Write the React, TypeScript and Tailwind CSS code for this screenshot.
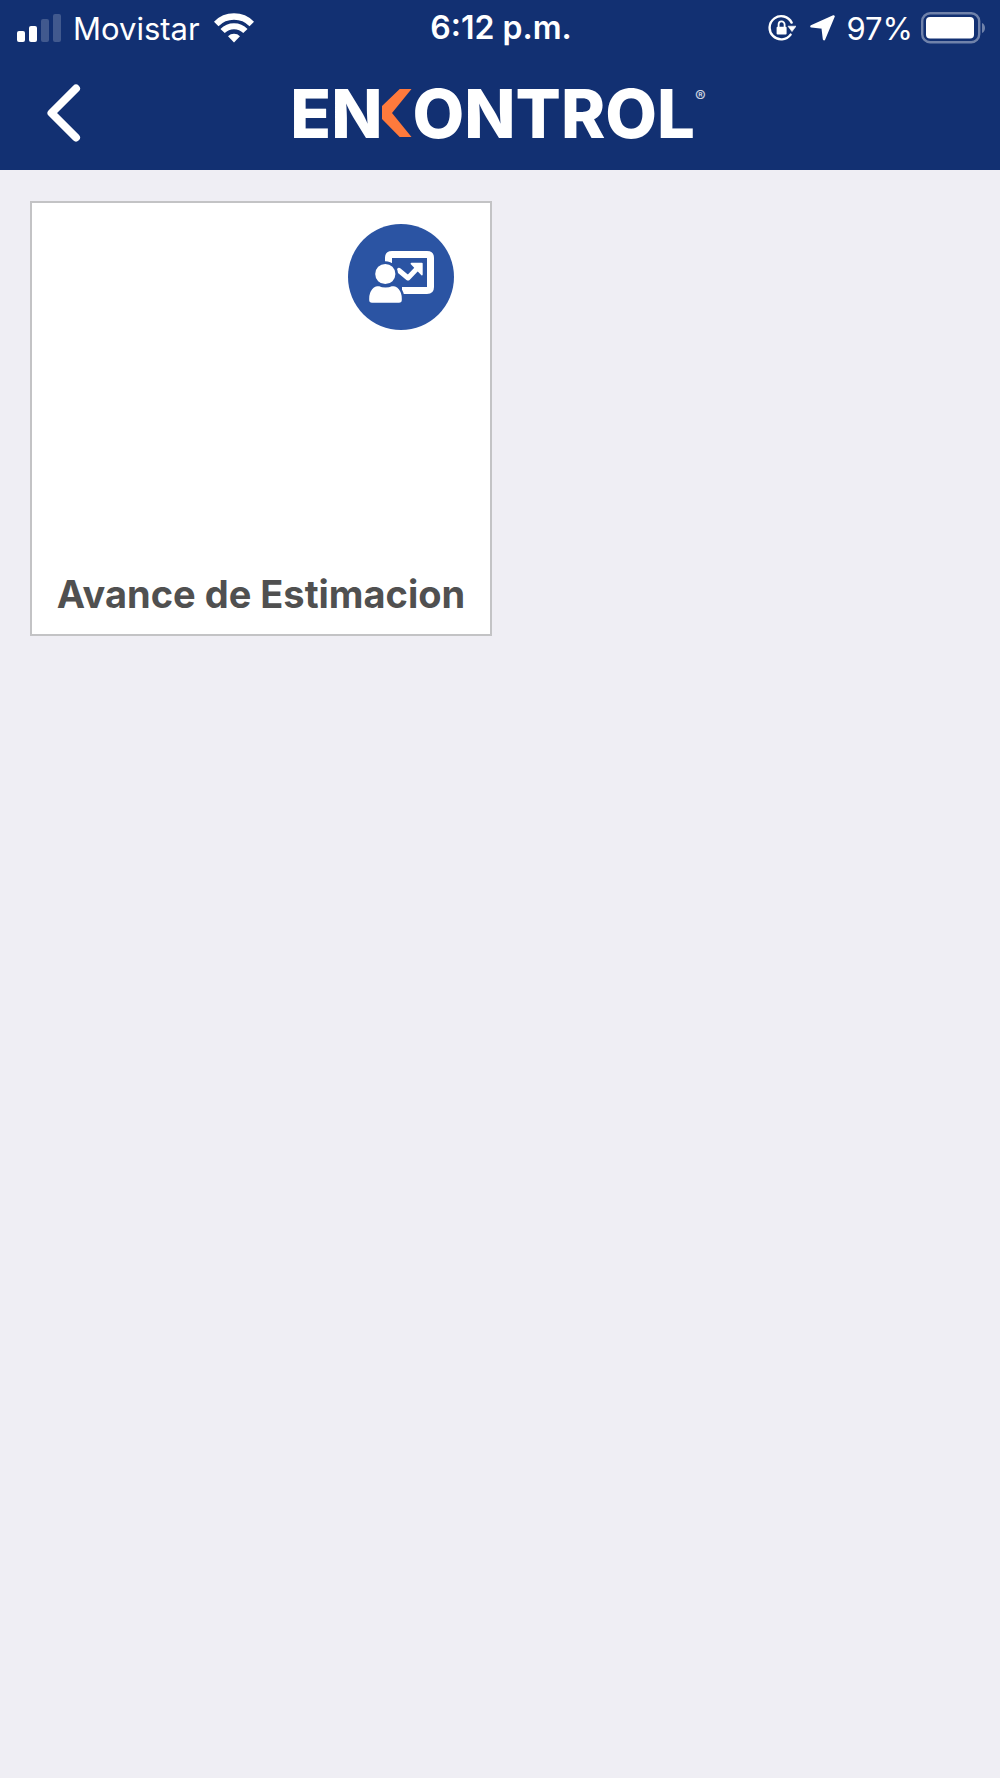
type Tile = {
  id: string;
  label: string;
};

const TILES: Tile[] = [{ id: 'avance', label: 'Avance de Estimacion' }];

const SignalIcon = () => (
  <svg width="44" height="28" viewBox="0 0 44 28" fill="white" aria-hidden="true">
    <rect x="0" y="17" width="8" height="11" rx="2" />
    <rect x="12" y="12" width="8" height="16" rx="2" />
    <rect x="24" y="5" width="8" height="23" rx="2" opacity="0.2" />
    <rect x="36" y="0" width="8" height="28" rx="2" opacity="0.2" />
  </svg>
);

const WifiIcon = () => (
  <svg width="40" height="30" viewBox="0 0 40 30" fill="none" stroke="white" aria-hidden="true">
    <path d="M2.2 11A25 25 0 0 1 37.8 11" strokeWidth="6.4" />
    <path d="M8.6 18A16 16 0 0 1 31.4 18" strokeWidth="6" />
    <path d="M20 29.4 14 23.2A8.5 8.5 0 0 1 26 23.2Z" fill="white" stroke="none" />
  </svg>
);

const RotationLockIcon = () => (
  <svg width="28" height="28" viewBox="0 0 28 28" fill="none" stroke="white" aria-hidden="true">
    <path d="M22.6 20.6A11.6 11.6 0 1 1 23.6 8.6" strokeWidth="2.4" strokeLinecap="round" />
    <path d="M20 12.2H28L24 17.6Z" fill="white" stroke="white" strokeWidth="0.6" strokeLinejoin="round" />
    <rect x="8.6" y="12.8" width="10" height="7.6" rx="1" fill="white" stroke="none" />
    <path d="M10.6 13V10.4A3 3 0 0 1 16.6 10.4V13" strokeWidth="1.8" />
  </svg>
);

const LocationIcon = () => (
  <svg width="26" height="26" viewBox="0 0 26 26" fill="white" aria-hidden="true">
    <path
      d="M1.4 11.4 23.6 1.4 14 24.2 12.6 12.6Z"
      stroke="white"
      strokeWidth="2.4"
      strokeLinejoin="round"
    />
  </svg>
);

const BatteryIcon = () => (
  <svg width="64" height="32" viewBox="0 0 64 32" aria-hidden="true">
    <rect x="1.2" y="1.2" width="57" height="29" rx="8" fill="none" stroke="white" strokeOpacity="0.4" strokeWidth="2.4" />
    <rect x="5" y="5" width="48" height="21.6" rx="4" fill="white" />
    <path d="M61 11C65 12.6 65 19.4 61 21Z" fill="white" fillOpacity="0.4" />
  </svg>
);

const PresentationIcon = () => (
  <svg width="106" height="106" viewBox="0 0 106 106" fill="none" stroke="white" aria-hidden="true">
    <path d="M40.5 39V34Q40.5 30.5 44 30.5H79Q82.5 30.5 82.5 34V63Q82.5 66.5 79 66.5H54" strokeWidth="7" />
    <path d="M51 46.5 60 54 70 43.5" strokeWidth="5" strokeLinejoin="round" strokeLinecap="round" />
    <path d="M63.5 39.6H73.8V50.5Z" fill="white" strokeWidth="1.8" strokeLinejoin="round" />
    {/* the blue edge keeps the person apart from the board */}
    <circle cx="37.3" cy="50" r="11.4" fill="white" stroke="#2b54a3" strokeWidth="2.6" />
    <path
      d="M20 74.5C20 66 25 60.8 31 60.8Q37.5 63.6 44 60.8C50 60.8 55 66 55 74.5V76Q55 80 51 80H24Q20 80 20 76Z"
      fill="white"
      stroke="#2b54a3"
      strokeWidth="2.4"
    />
  </svg>
);

const StatusBar = () => (
  <div className="grid grid-cols-[1fr_auto_1fr] items-center h-14 pl-[17px] pr-[15px] text-[31px] leading-none">
    <div className="flex items-center">
      <SignalIcon />
      <span className="ml-3">Movistar</span>
      <span className="ml-3.5">
        <WifiIcon />
      </span>
    </div>
    <span className="font-semibold text-[32px]">6:12 p.m.</span>
    <div className="flex items-center justify-end">
      <RotationLockIcon />
      <span className="ml-3.5 mr-2.5">
        <LocationIcon />
      </span>
      <span>97%</span>
      <span className="ml-2">
        <BatteryIcon />
      </span>
    </div>
  </div>
);

const Logo = () => (
  <h1 className="flex items-center justify-center text-white font-extrabold text-[67px] leading-none">
    <span>EN</span>
    <svg width="30" height="48" viewBox="0 0 30 48" role="img" aria-label="K">
      <path d="M17.7 0H29.5L10 24 29.5 48H17.7L0 30V17Z" fill="#ff7a3c" />
    </svg>
    <span>ONTROL</span>
    <span className="self-start pt-2 text-base leading-none font-normal text-white/80">®</span>
  </h1>
);

const Header = () => (
  <header className="bg-[#123072] text-white">
    <StatusBar />
    <nav className="grid grid-cols-[100px_1fr_104px] items-center h-[114px]">
      <button type="button" aria-label="Atrás" className="flex justify-center pl-7">
        <svg width="34" height="58" viewBox="0 0 34 58" fill="none" stroke="white" aria-hidden="true">
          <path d="M29 4.5 4.5 29 29 53.5" strokeWidth="8" strokeLinecap="round" strokeLinejoin="round" />
        </svg>
      </button>
      <Logo />
    </nav>
  </header>
);

const App: React.FC = () => {
  return (
    <div className="min-h-screen bg-[#efeef4] font-['Inter',sans-serif]">
      <Header />
      <main className="grid grid-cols-2 gap-4 px-[30px] py-[31px]">
        {TILES.map((tile) => (
          <button
            key={tile.id}
            type="button"
            className="flex flex-col justify-between h-[435px] bg-white border-2 border-[#c3c3c5] pt-[21px] pb-5"
          >
            <span className="self-end mr-9 rounded-full bg-[#2b54a3]">
              <PresentationIcon />
            </span>
            <span className="self-center text-[38px] leading-10 font-bold text-[#505050] whitespace-nowrap">
              {tile.label}
            </span>
          </button>
        ))}
      </main>
    </div>
  );
};

export default App;
